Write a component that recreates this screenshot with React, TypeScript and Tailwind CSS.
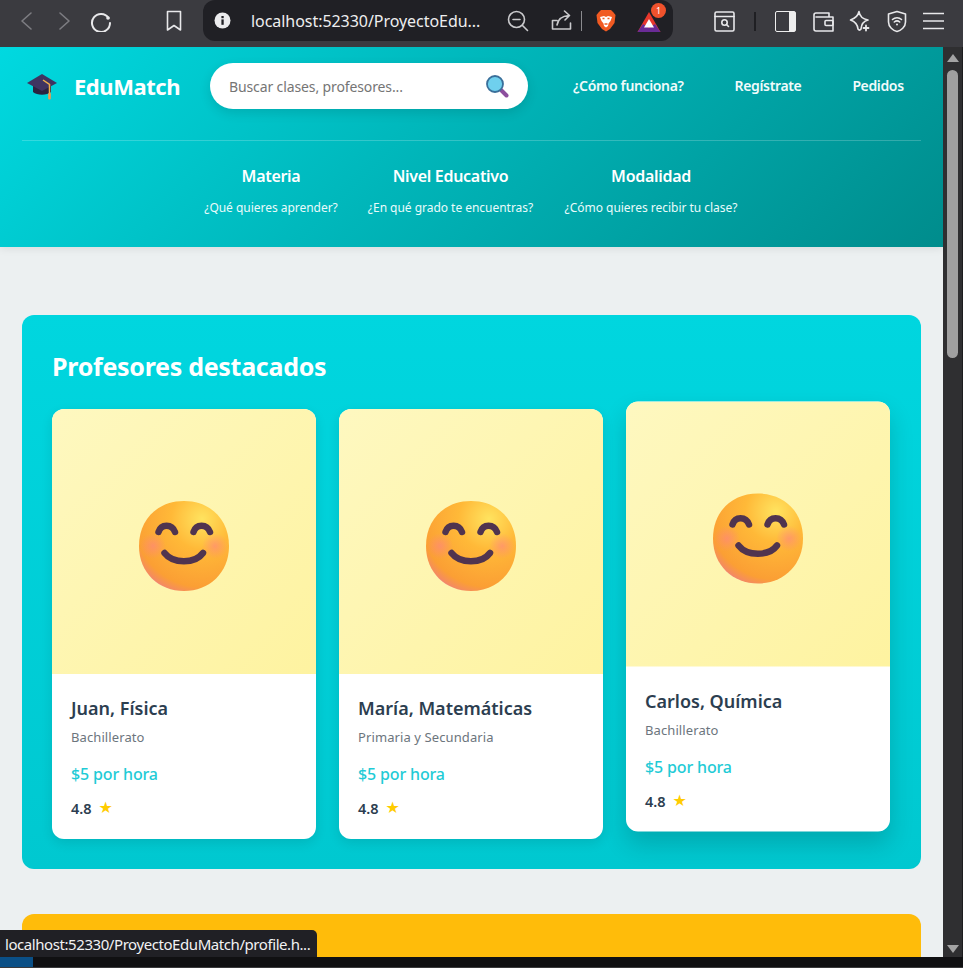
import React from "react";

const FONT = "font-['Noto_Sans','Open_Sans',sans-serif]";

function Smile({ id }: { id: string }) {
  return (
    <svg width="92" height="92" viewBox="0 0 92 92" aria-hidden="true">
      <defs>
        <radialGradient id={`f${id}`} cx="0.7" cy="0.2" r="0.9">
          <stop offset="0" stopColor="#ffe35f" />
          <stop offset="0.38" stopColor="#ffb938" />
          <stop offset="0.84" stopColor="#fb9f34" />
          <stop offset="0.95" stopColor="#f48a62" />
          <stop offset="1" stopColor="#e57ab8" />
        </radialGradient>
        <radialGradient id={`c${id}`}>
          <stop offset="0" stopColor="#ff7f8c" stopOpacity="0.55" />
          <stop offset="1" stopColor="#ff7f8c" stopOpacity="0" />
        </radialGradient>
      </defs>
      <path d="M46 1C72 1 91 19 91 46C91 73 71 91 46 91C21 91 1 73 1 46C1 19 20 1 46 1Z" fill={`url(#f${id})`} />
      <circle cx="15" cy="46" r="13" fill={`url(#c${id})`} />
      <circle cx="77" cy="46" r="13" fill={`url(#c${id})`} />
      <g fill="none" stroke="#50344f" strokeWidth="6.5" strokeLinecap="round">
        <path d="M20.5 32C23 23.5 34 23.5 37 32" />
        <path d="M55.5 32C58 23.5 69 23.5 72 32" />
        <path d="M26.5 53C35 64 57 64 65 53" />
      </g>
    </svg>
  );
}

function TeacherCard({ id, name, level, raised }: { id: string; name: string; level: string; raised?: boolean }) {
  return (
    <div className={`w-[264px] h-[429.5px] rounded-[12px] bg-white overflow-hidden ${raised ? "-translate-y-[7.5px] shadow-[0_12px_24px_rgba(0,0,0,0.16)]" : "shadow-[0_4px_12px_rgba(0,0,0,0.1)]"}`}>
      <div className="h-[265px] flex items-center justify-center pt-[8px] bg-[linear-gradient(135deg,#fef8c0,#fef3a0)]">
        <Smile id={id} />
      </div>
      <div className="px-[19px] pt-[20px]">
        <h3 className="text-[18px] leading-[28px] font-semibold text-[#2c3e50]">{name}</h3>
        <p className="mt-[6px] text-[13px] leading-[18px] text-[#6c757d] tracking-[0.1px]">{level}</p>
        <p className="mt-[16px] text-[16px] leading-[24px] font-medium text-[#1fcbd6] tracking-[-0.15px]">$5 por hora</p>
        <div className="mt-[12px] flex items-center gap-[7px] text-[14.5px] leading-[20px] font-semibold text-[#2c3e50]">
          <span>4.8</span>
          <span className="text-[#ffcc00] text-[16px] font-['DejaVu_Sans']">★</span>
        </div>
      </div>
    </div>
  );
}

function Filter({ title, sub, cls }: { title: string; sub: string; cls: string }) {
  return (
    <div className={`flex flex-col items-center ${cls}`}>
      <div className="text-[16px] leading-[24px] font-semibold text-white tracking-[-0.3px]">{title}</div>
      <div className="mt-[11px] text-[12px] leading-[18px] text-[#e9fbfb] tracking-[-0.03px] whitespace-nowrap">{sub}</div>
    </div>
  );
}

function Toolbar() {
  const s = { fill: "none", stroke: "#e8e8ea", strokeWidth: 1.6, strokeLinecap: "round" as const, strokeLinejoin: "round" as const };
  return (
    <div className="h-[47px] shrink-0 bg-[#3b3b40] flex items-center">
      <div className="w-[203px] h-full flex items-center pl-[20px] pb-[5px] shrink-0">
        <svg width="14" height="20" viewBox="0 0 14 20" {...s} stroke="#7d7d82"><path d="M11 2L2 10L11 18" /></svg>
        <svg className="ml-[23px]" width="14" height="20" viewBox="0 0 14 20" {...s} stroke="#7d7d82"><path d="M3 2L12 10L3 18" /></svg>
        <svg className="ml-[19px]" width="22" height="22" viewBox="0 0 22 22" {...s} strokeWidth="2"><path d="M18.5 8A9 9 0 1 0 20 13" /><circle cx="18" cy="8" r="1.8" fill="#e8e8ea" stroke="none" /></svg>
        <svg className="ml-[54px]" width="16" height="22" viewBox="0 0 16 22" {...s}><path d="M1.5 1.5H14.5V20L8 15.5L1.5 20Z" /></svg>
      </div>
      <div className="w-[470px] h-[41px] -mt-[6px] bg-[#202025] rounded-[12px] flex items-center shrink-0">
        <svg className="ml-[11px]" width="17" height="17" viewBox="0 0 17 17"><circle cx="8.5" cy="8.5" r="8" fill="#ececee" /><rect x="7.4" y="7.4" width="2.3" height="5.4" fill="#202025" /><rect x="7.4" y="4" width="2.3" height="2.2" fill="#202025" /></svg>
        <span className="ml-[20px] w-[256px] text-[16px] leading-[24px] text-[#eeeeef] whitespace-nowrap tracking-[-0.05px]">localhost:52330/ProyectoEdu...</span>
        <svg width="22" height="22" viewBox="0 0 22 22" {...s} stroke="#c9c9cc"><circle cx="9.5" cy="9.5" r="8" /><path d="M6 9.5H13M15.5 15.5L20.5 20.5" /></svg>
        <svg className="ml-[22px]" width="21" height="22" viewBox="0 0 21 22" {...s} stroke="#c9c9cc"><path d="M1.5 19V10.5H6M1.5 19H19.5V13M6 15C7 9 11 6 18 5.5M13.5 1L18.5 5.5L14 10" /></svg>
        <span className="ml-[9px] w-px h-[20px] bg-[#8b8b8f]" />
        <svg className="ml-[14px]" width="20" height="23" viewBox="0 0 20 23">
          <path d="M5 1H15L17.5 3.5L19.5 6L18.5 14L14 20L10 22.5L6 20L1.5 14L0.5 6L2.5 3.5Z" fill="#f15a22" />
          <path d="M4 8L8 7L10 8L12 7L16 8L14.5 12L12.5 14.5L12 17L10 18.5L8 17L7.5 14.5L5.5 12Z" fill="#ffffff" />
          <path d="M6.5 9.5H8.5M11.5 9.5H13.5M8.5 15H11.5" stroke="#f15a22" strokeWidth="1.4" />
        </svg>
        <div className="relative ml-[21px] w-[24px] h-[22px] mt-[3px]">
          <svg width="24" height="22" viewBox="0 0 24 22">
            <path d="M12 1L23.5 21H0.5Z" fill="#e8372c" />
            <path d="M0.5 21L6 13L12 17L18 13L23.5 21Z" fill="#6a2b96" />
            <path d="M12 8L17 16.5H7Z" fill="#ffffff" />
          </svg>
          <span className="absolute -top-[8px] left-[14px] w-[15px] h-[15px] rounded-full bg-[#f0522c] text-white text-[9px] leading-[15px] text-center">1</span>
        </div>
      </div>
      <div className="flex items-center ml-[41px] -mt-[5px]">
        <svg width="21" height="21" viewBox="0 0 21 21" {...s}><rect x="1" y="1" width="19" height="19" rx="1.5" /><path d="M1 5.5H20" /><circle cx="10.5" cy="11.5" r="2.7" /><path d="M12.5 13.5L14.5 15.5" /></svg>
        <span className="ml-[19px] w-[2px] h-[19px] bg-[#1f1f23]" />
        <div className="ml-[19px] w-[21px] h-[21px] rounded-[2px] border-[1.6px] border-[#eeeeee] flex justify-end"><div className="w-[6px] h-full bg-[#eeeeee]" /></div>
        <svg className="ml-[17px]" width="21" height="21" viewBox="0 0 21 21" {...s}><path d="M3 2H16V6M3 2C1.5 2 1 3 1 4V18C1 19 2 20 3 20H20V6H3" /><rect x="12" y="9.5" width="8" height="5" rx="1" /></svg>
        <svg className="ml-[15px]" width="22" height="22" viewBox="0 0 22 22" {...s}><path d="M10 1.5C10.6 6 12.5 8.8 19 10C15 11 12.5 13 12 19C11 20.5 10 20.5 9 19C8.5 14 6 11.5 1.5 10C6 8.5 9 6 10 1.5Z" /><path d="M17 15.5V20.5M14.5 18H19.5" strokeWidth="1.8" /></svg>
        <svg className="ml-[16px]" width="20" height="23" viewBox="0 0 20 23" {...s}><path d="M10 1.5L18.5 4V12C18.5 17 14 20.5 10 21.5C6 20.5 1.5 17 1.5 12V4Z" /><path d="M5.5 9.5C8 7.2 12 7.2 14.5 9.5M7.3 12C8.8 10.7 11.2 10.7 12.7 12" /><circle cx="10" cy="14.5" r="1" fill="#e8e8ea" stroke="none" /></svg>
        <svg className="ml-[16px]" width="21" height="18" viewBox="0 0 21 18" fill="none" stroke="#e8e8ea" strokeWidth="1.6"><path d="M0 1.5H21M0 9H21M0 16.5H21" /></svg>
      </div>
    </div>
  );
}

export default function App() {
  return (
    <div className={`relative w-[963px] h-[968px] overflow-hidden flex flex-col bg-[#101012] ${FONT}`}>
      <Toolbar />
      <div className="h-[910px] shrink-0 flex">
        <div className="w-[943px] h-full overflow-hidden bg-[#ecf0f1]">
          <header className="h-[200px] bg-[linear-gradient(135deg,#00d9e0,#008c8c)] px-[22px] shadow-[0_2px_8px_rgba(0,0,0,0.08)]">
            <div className="h-[94px] border-b border-white/20 flex items-center pb-[15px]">
              <svg className="ml-[4px]" width="32" height="28" viewBox="0 0 32 28">
                <path d="M7 12V20C11 23.5 21 23.5 25 20V12Z" fill="#2a2440" />
                <path d="M16 2L31 11L16 19L1 11Z" fill="#3f3461" />
                <path d="M17 8L23.5 12.5V24" fill="none" stroke="#f0b04c" strokeWidth="1.5" />
                <rect x="22.2" y="21" width="2.6" height="6.5" rx="1" fill="#f59a4c" />
              </svg>
              <span className="ml-[16px] w-[136px] text-[22px] leading-[32px] font-bold text-white tracking-[-0.45px]">EduMatch</span>
              <div className="w-[318px] h-[46px] rounded-full bg-white shadow-[0_4px_12px_rgba(0,0,0,0.12)] flex items-center pl-[19px]">
                <span className="w-[256px] text-[14px] text-[#757575] tracking-[-0.12px]">Buscar clases, profesores...</span>
                <svg width="24" height="24" viewBox="0 0 24 24">
                  <path d="M15 15L21.5 21.5" stroke="#8d4f9e" strokeWidth="4" strokeLinecap="round" />
                  <circle cx="10" cy="10" r="8" fill="#6fd0ee" stroke="#3a6f9a" strokeWidth="1.8" />
                </svg>
              </div>
              <nav className="ml-[45px] flex gap-[51px] text-[14px] leading-[20px] font-semibold text-[#f0fbfb] tracking-[-0.36px]">
                <span>¿Cómo funciona?</span>
                <span>Regístrate</span>
                <span>Pedidos</span>
              </nav>
            </div>
            <div className="flex pt-[23px]">
              <Filter cls="ml-[182px] w-[134px]" title="Materia" sub="¿Qué quieres aprender?" />
              <Filter cls="ml-[29px] w-[167px]" title="Nivel Educativo" sub="¿En qué grado te encuentras?" />
              <Filter cls="ml-[30px] w-[174px]" title="Modalidad" sub="¿Cómo quieres recibir tu clase?" />
            </div>
          </header>
          <main className="px-[22px] pt-[68px]">
            <section className="h-[554px] rounded-[12px] bg-linear-to-b from-[#00d6df] to-[#00c8d0] px-[30px] pt-[32px]">
              <h2 className="text-[25px] leading-[38px] font-bold text-white tracking-[-0.28px]">Profesores destacados</h2>
              <div className="mt-[24px] flex gap-[23px]">
                <TeacherCard id="a" name="Juan, Física" level="Bachillerato" />
                <TeacherCard id="b" name="María, Matemáticas" level="Primaria y Secundaria" />
                <TeacherCard id="c" name="Carlos, Química" level="Bachillerato" raised />
              </div>
            </section>
            <section className="mt-[45px] h-[200px] rounded-[12px] bg-[#ffbc0a]" />
          </main>
        </div>
        <div className="w-[20px] h-full bg-[#2f2f31] border-r border-[#1c1c1e] flex flex-col items-center">
          <svg className="mt-[7px]" width="12" height="8" viewBox="0 0 12 8"><path d="M6 0L12 8H0Z" fill="#a3a3a3" /></svg>
          <div className="mt-[8px] w-[11px] h-[288px] rounded-full bg-[#a0a0a0]" />
          <svg className="mt-auto mb-[4px]" width="12" height="8" viewBox="0 0 12 8"><path d="M0 0H12L6 8Z" fill="#a3a3a3" /></svg>
        </div>
      </div>
      <div className="h-[11px] shrink-0 flex border-b border-[#3a3a3c]">
        <div className="w-[33px] bg-[#0a4f86]" />
      </div>
      <div className="absolute left-0 top-[930px] w-[317px] h-[27px] rounded-tr-[5px] bg-[#202025] pl-[5px] text-[15px] leading-[28px] text-[#f2f2f3] whitespace-nowrap tracking-[-0.43px]">
        localhost:52330/ProyectoEduMatch/profile.h...
      </div>
    </div>
  );
}
